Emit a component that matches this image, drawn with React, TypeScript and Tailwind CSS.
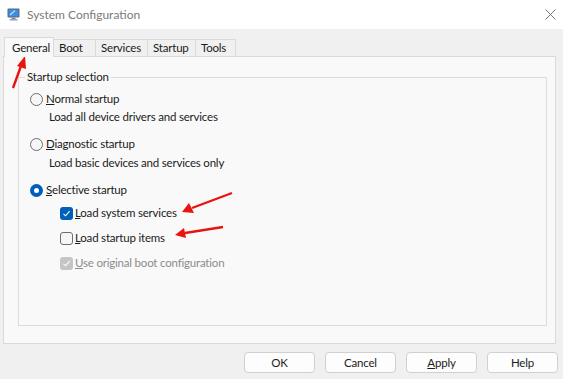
import React from 'react'

// --- small pieces ---
const AppIcon = () => (
  <svg width="15" height="15" viewBox="0 0 15 15">
    <rect x="1.5" y="1.5" width="12" height="9" rx="1" fill="#5a6b86" />
    <rect x="2.7" y="2.6" width="9.6" height="6.8" fill="#3b8ee0" />
    <path d="M4 8 L9 3.5" stroke="#bfe0ff" strokeWidth="1.2" />
    <rect x="5.5" y="10.5" width="4" height="1.5" fill="#7b8799" />
    <rect x="3.5" y="12" width="8" height="1.6" rx="0.5" fill="#9aa3b1" />
  </svg>
)

const Radio = ({ checked }: { checked?: boolean }) =>
  checked ? (
    <span className="w-[13px] h-[13px] rounded-full bg-[#005fb8] flex items-center justify-center shrink-0">
      <span className="w-[5px] h-[5px] rounded-full bg-white" />
    </span>
  ) : (
    <span className="w-[13px] h-[13px] rounded-full border border-[#6e6e6e] bg-[#f6f6f6] shrink-0" />
  )

const Check = ({ state }: { state: 'on' | 'off' | 'disabled' }) => {
  if (state === 'off')
    return <span className="w-[13px] h-[13px] rounded-[3px] border border-[#6e6e6e] bg-[#f6f6f6] shrink-0" />
  const bg = state === 'on' ? 'bg-[#005fb8]' : 'bg-[#c5c5c5]'
  return (
    <span className={`w-[13px] h-[13px] rounded-[3px] ${bg} flex items-center justify-center shrink-0`}>
      <svg width="9" height="9" viewBox="0 0 9 9">
        <path d="M1.5 4.8 L3.6 6.8 L7.6 2.2" stroke="white" strokeWidth="1.1" fill="none" />
      </svg>
    </span>
  )
}

const Btn = ({ children }: { children: React.ReactNode }) => (
  <button className="w-[71px] h-[21px] rounded-[4px] border border-[#d0d0d0] bg-[#fdfdfd] text-[#1b1b1b] flex items-center justify-center">
    {children}
  </button>
)

export default function App() {
  return (
    <div
      className="w-[563px] h-[379px] bg-[#f0f0f0] relative overflow-hidden text-[11.5px] tracking-[-0.2px] leading-[16px] text-[#1b1b1b]"
      style={{ fontFamily: 'Lato, "Noto Sans", sans-serif' }}
    >
      {/* title bar */}
      <div className="h-[29px] bg-white flex items-center pl-[6px] pr-[7px]">
        <AppIcon />
        <span className="ml-[6px] text-[#7a7a7a] text-[12px] tracking-normal">System Configuration</span>
        <svg className="ml-auto" width="11" height="11" viewBox="0 0 11 11">
          <path d="M0.5 0.5 L10.5 10.5 M10.5 0.5 L0.5 10.5" stroke="#6b6b6b" strokeWidth="0.9" />
        </svg>
      </div>

      {/* tabs */}
      <div className="pl-[4px] pt-[8px] flex items-end">
        <div className="w-[50px] h-[20px] -mb-px pl-[7px] flex items-center border border-b-0 border-[#d9d9d9] bg-[#f9f9f9] relative z-10">
          General
        </div>
        <div className="w-[42px] h-[17px] pl-[5px] flex items-center border border-l-0 border-b-0 border-[#d9d9d9] bg-[#f0f0f0]">Boot</div>
        <div className="w-[52px] h-[17px] pl-[5px] flex items-center border border-l-0 border-b-0 border-[#d9d9d9] bg-[#f0f0f0]">Services</div>
        <div className="w-[48px] h-[17px] pl-[5px] flex items-center border border-l-0 border-b-0 border-[#d9d9d9] bg-[#f0f0f0]">Startup</div>
        <div className="w-[40px] h-[17px] pl-[5px] flex items-center border border-l-0 border-b-0 border-[#d9d9d9] bg-[#f0f0f0]">Tools</div>
      </div>

      {/* panel */}
      <div className="ml-[3px] w-[553px] h-[288px] border border-[#d9d9d9] bg-[#f9f9f9] pl-[14px] pt-[12px]">
        <fieldset className="w-[529px] h-[257px] border border-[#dcdcdc]">
          <legend className="px-[2px] ml-[6px]">Startup selection</legend>
          <div className="pl-[11px]">
            <div className="flex items-center gap-[3px] mt-[6px]">
              <Radio />
              <span><u>N</u>ormal startup</span>
            </div>
            <div className="ml-[19px] mt-[2px]">Load all device drivers and services</div>

            <div className="flex items-center gap-[3px] mt-[11px]">
              <Radio />
              <span><u>D</u>iagnostic startup</span>
            </div>
            <div className="ml-[19px] mt-[3px]">Load basic devices and services only</div>

            <div className="flex items-center gap-[3px] mt-[11px]">
              <Radio checked />
              <span><u>S</u>elective startup</span>
            </div>
            <div className="ml-[30px] mt-[7px] flex flex-col gap-[9px]">
              <div className="flex items-center gap-[2px]">
                <Check state="on" />
                <span><u>L</u>oad system services</span>
              </div>
              <div className="flex items-center gap-[2px]">
                <Check state="off" />
                <span><u>L</u>oad startup items</span>
              </div>
              <div className="flex items-center gap-[2px] text-[#8c8c8c]">
                <Check state="disabled" />
                <span><u>U</u>se original boot configuration</span>
              </div>
            </div>
          </div>
        </fieldset>
      </div>

      {/* buttons */}
      <div className="flex justify-end gap-[10px] pr-[5px] mt-[8px]">
        <Btn>OK</Btn>
        <Btn>Cancel</Btn>
        <Btn><span><u>A</u>pply</span></Btn>
        <Btn>Help</Btn>
      </div>

      {/* red annotation arrows */}
      <svg className="absolute inset-0 pointer-events-none" width="563" height="379">
        <path d="M13 88 L21 66" stroke="#e8140f" strokeWidth="2.4" />
        <path d="M25 56 L17 66 L26 69 Z" fill="#e8140f" />
        <path d="M232 193 L192 208" stroke="#e8140f" strokeWidth="2.4" />
        <path d="M182 212 L189 203 L194 213 Z" fill="#e8140f" />
        <path d="M223 227 L185 233" stroke="#e8140f" strokeWidth="2.4" />
        <path d="M175 235 L184 228 L186 238 Z" fill="#e8140f" />
      </svg>
    </div>
  )
}
